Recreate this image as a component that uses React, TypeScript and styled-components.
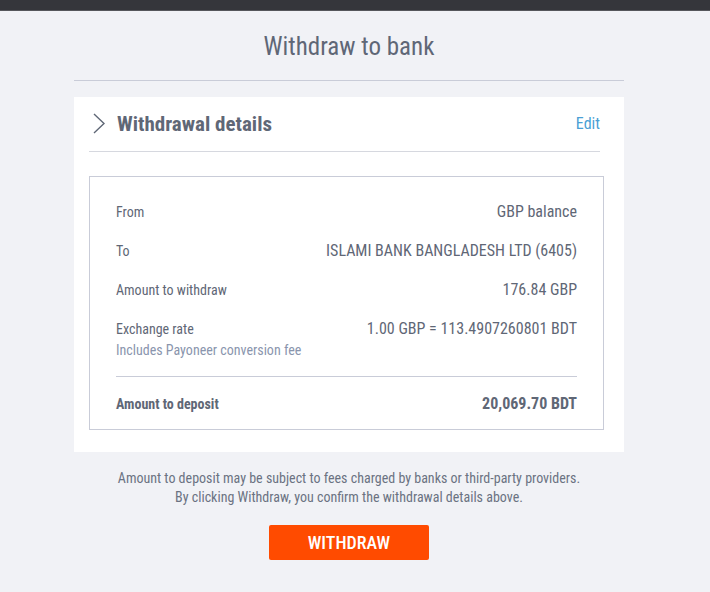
import React from "react";
import styled, { createGlobalStyle } from "styled-components";

const Global = createGlobalStyle`
  html, body { margin: 0; padding: 0; background: #f1f2f6; }
  body { font-family: "Roboto Condensed", Roboto, "Liberation Sans", sans-serif; font-stretch: condensed; }
`;

const Page = styled.div`
  min-height: 592px;
  background: #f1f2f6;
  display: flex;
  flex-direction: column;
`;

const TopBar = styled.div`
  height: 10px;
  background: #35363b;
  border-bottom: 1px solid #56575c;
`;

const Content = styled.div`
  display: flex;
  flex-direction: column;
  align-items: center;
  padding-right: 12px;
`;

const Title = styled.h1`
  margin: 21px 0 0;
  font-size: 25px;
  font-weight: 400;
  color: #5f6776;
  line-height: 30px;
`;

const Rule = styled.div`
  width: 550px;
  height: 1px;
  background: #c9ccd8;
  margin-top: 18px;
`;

const Card = styled.div`
  width: 550px;
  margin-top: 16px;
  background: #fff;
  padding: 0 24px 22px 15px;
  box-sizing: border-box;
`;

const Header = styled.div`
  display: flex;
  align-items: center;
  height: 53px;
  padding-bottom: 1px;
  border-bottom: 1px solid #d6d8df;
`;

const HeadTitle = styled.h2`
  margin: 0 0 0 12px;
  font-size: 21px;
  font-weight: 700;
  color: #5f6776;
  flex: 1;
`;

const EditLink = styled.a`
  color: #4a9fd5;
  font-size: 16px;
  cursor: pointer;
`;

const Box = styled.div`
  margin-top: 24px;
  margin-right: -4px;
  border: 1px solid #c9ccd8;
  padding: 26px 26px 16px 26px;
`;

const Row = styled.div<{ $strong?: boolean }>`
  display: flex;
  justify-content: space-between;
  align-items: flex-start;
  padding: ${(p) => (p.$strong ? "18px 0 0" : "0 0 21px")};
  color: #5f6776;
  font-weight: ${(p) => (p.$strong ? 700 : 400)};
`;

const Label = styled.div`
  font-size: 14px;
  line-height: 18px;
`;

const Value = styled.div`
  font-size: 16px;
  line-height: 18px;
`;

const Sub = styled.div`
  font-size: 14px;
  line-height: 18px;
  color: #8a95ad;
  margin-top: 3px;
`;

const Divider = styled.div`
  height: 1px;
  background: #c9ccd8;
  margin-top: -4px;
`;

const Note = styled.p`
  margin: 17px 0 0;
  text-align: center;
  font-size: 14px;
  line-height: 19px;
  color: #6b7282;
`;

const Button = styled.button`
  margin-top: 18px;
  width: 160px;
  height: 35px;
  background: #ff4b00;
  border: none;
  border-radius: 2px;
  color: #fff;
  font-family: inherit;
  font-size: 18px;
  font-weight: 500;
  cursor: pointer;
`;

const Chevron = () => (
  <svg width="16" height="23" viewBox="0 0 16 23">
    <path d="M5 2 L15 11.5 L5 21" fill="none" stroke="#5f6776" strokeWidth="1.4" />
  </svg>
);

export default function App() {
  return (
    <>
      <Global />
      <Page>
        <TopBar />
        <Content>
          <Title>Withdraw to bank</Title>
          <Rule />
          <Card>
            <Header>
              <Chevron />
              <HeadTitle>Withdrawal details</HeadTitle>
              <EditLink>Edit</EditLink>
            </Header>
            <Box>
              <Row>
                <Label>From</Label>
                <Value>GBP balance</Value>
              </Row>
              <Row>
                <Label>To</Label>
                <Value>ISLAMI BANK BANGLADESH LTD (6405)</Value>
              </Row>
              <Row>
                <Label>Amount to withdraw</Label>
                <Value>176.84 GBP</Value>
              </Row>
              <Row>
                <div>
                  <Label>Exchange rate</Label>
                  <Sub>Includes Payoneer conversion fee</Sub>
                </div>
                <Value>1.00 GBP = 113.4907260801 BDT</Value>
              </Row>
              <Divider />
              <Row $strong>
                <Label>Amount to deposit</Label>
                <Value>20,069.70 BDT</Value>
              </Row>
            </Box>
          </Card>
          <Note>
            Amount to deposit may be subject to fees charged by banks or third-party providers.
            <br />
            By clicking Withdraw, you confirm the withdrawal details above.
          </Note>
          <Button>WITHDRAW</Button>
        </Content>
      </Page>
    </>
  );
}
